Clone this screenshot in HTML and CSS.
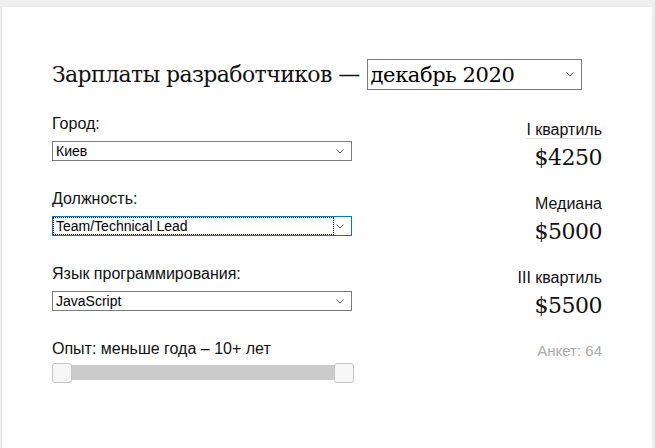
FILE: index.html
```html
<!DOCTYPE html>
<html lang="ru">
<head>
<meta charset="utf-8">
<title>Зарплаты разработчиков</title>
<link rel="stylesheet" href="styles.css">
</head>
<body>
<div class="card">
  <h1 class="title">Зарплаты разработчиков —
    <span class="sel sel-month">
      <select class="sel-input"><option>декабрь 2020</option></select>
      <svg class="chev" width="8" height="5" viewBox="0 0 8 5"><path d="M0.5 0.5 L4 4 L7.5 0.5" fill="none" stroke="#555" stroke-width="1"/></svg>
    </span>
  </h1>
  <div class="grid">
    <div class="filters">
      <div class="field">
        <div class="label">Город:</div>
        <span class="sel">
          <select class="sel-input"><option>Киев</option></select>
          <svg class="chev" width="8" height="5" viewBox="0 0 8 5"><path d="M0.5 0.5 L4 4 L7.5 0.5" fill="none" stroke="#555" stroke-width="1"/></svg>
        </span>
      </div>
      <div class="field">
        <div class="label">Должность:</div>
        <span class="sel sel-focus">
          <select class="sel-input"><option>Team/Technical Lead</option></select>
          <svg class="chev" width="8" height="5" viewBox="0 0 8 5"><path d="M0.5 0.5 L4 4 L7.5 0.5" fill="none" stroke="#555" stroke-width="1"/></svg>
        </span>
      </div>
      <div class="field">
        <div class="label">Язык программирования:</div>
        <span class="sel">
          <select class="sel-input"><option>JavaScript</option></select>
          <svg class="chev" width="8" height="5" viewBox="0 0 8 5"><path d="M0.5 0.5 L4 4 L7.5 0.5" fill="none" stroke="#555" stroke-width="1"/></svg>
        </span>
      </div>
      <div class="field">
        <div class="label">Опыт: меньше года – 10+ лет</div>
        <div class="range">
          <span class="handle"></span>
          <span class="handle"></span>
        </div>
      </div>
    </div>
    <div class="stats">
      <div class="stat">
        <div class="stat-label"><span class="abbr">I квартиль</span></div>
        <div class="stat-value">$4250</div>
      </div>
      <div class="stat">
        <div class="stat-label">Медиана</div>
        <div class="stat-value">$5000</div>
      </div>
      <div class="stat">
        <div class="stat-label">III квартиль</div>
        <div class="stat-value">$5500</div>
      </div>
      <div class="count">Анкет: 64</div>
    </div>
  </div>
</div>
</body>
</html>
```
FILE: styles.css
```css
html, body {
  margin: 0;
  height: 100%;
}
body {
  background: #efefef;
  font-family: "Liberation Sans", Arial, sans-serif;
  color: #111;
  overflow: hidden;
}
.card {
  background: #fff;
  margin: 7px 3px 0 2px;
  min-height: 441px;
  box-sizing: border-box;
  padding: 52px 50px 0 50px;
  box-shadow: 0 0 3px rgba(0,0,0,0.06);
}
.title {
  margin: 0;
  font-family: "DejaVu Serif", Georgia, serif;
  font-weight: normal;
  font-size: 22px;
  line-height: 30px;
  display: flex;
  align-items: center;
  gap: 7px;
  letter-spacing: -0.6px;
}
.sel {
  position: relative;
  display: block;
  width: 300px;
  height: 20px;
}
.sel-input {
  appearance: none;
  -webkit-appearance: none;
  display: block;
  width: 100%;
  height: 100%;
  box-sizing: border-box;
  margin: 0;
  border: 1px solid #7a7a7a;
  border-radius: 0;
  background: #fff;
  font-family: "Liberation Sans", Arial, sans-serif;
  font-size: 14px;
  color: #000;
  padding: 0 0 0 3px;
  outline: none;
}
.chev {
  position: absolute;
  right: 8px;
  top: 8px;
  pointer-events: none;
}
.sel-month {
  width: 215px;
  height: 31px;
}
.sel-month .sel-input {
  font-family: "DejaVu Serif", Georgia, serif;
  font-size: 21px;
  letter-spacing: -0.4px;
  padding-left: 3px;
}
.sel-month .chev {
  top: 13px;
}
.sel-focus .sel-input {
  border: 1px solid #0078d7;
  background: #fff;
}
.sel-focus::before {
  content: "";
  position: absolute;
  left: 1px;
  top: 1px;
  width: 281px;
  bottom: 1px;
  border: 1px dotted #000;
  box-sizing: border-box;
  pointer-events: none;
  z-index: 1;
}
.grid {
  display: flex;
  justify-content: space-between;
  margin-top: 24px;
}
.filters {
  width: 302px;
}
.field {
  margin-bottom: 28px;
}
.label {
  font-size: 16px;
  line-height: 19px;
  margin-bottom: 8px;
}
.range {
  height: 15px;
  margin-top: -1px;
  background: #cbcbcb;
  display: flex;
  justify-content: space-between;
  align-items: center;
}
.handle {
  width: 18px;
  height: 18px;
  background: #f6f6f6;
  border: 1px solid #c5c5c5;
  border-radius: 3px;
}
.stats {
  text-align: right;
  padding-top: 6px;
}
.stat {
  margin-bottom: 21px;
}
.stat-label {
  font-size: 16px;
  line-height: 19px;
}
.abbr {
  border-bottom: 1px solid #ddd;
}
.stat-value {
  font-family: "DejaVu Serif", Georgia, serif;
  font-size: 22px;
  line-height: 30px;
  margin-top: 4px;
  letter-spacing: -0.5px;
}
.count {
  color: #aaa;
  font-size: 15px;
  line-height: 18px;
  margin-top: 13px;
}
```
